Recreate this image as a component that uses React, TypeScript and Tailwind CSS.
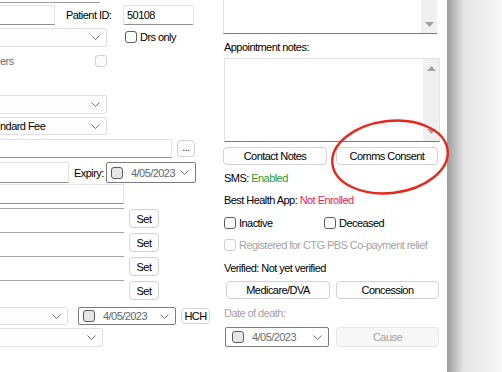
import React from 'react';

const Chevron: React.FC<{ color?: string }> = ({ color = '#707070' }) => (
  <svg width="9" height="5" viewBox="0 0 9 5" className="shrink-0">
    <path d="M0.5 0.5 L4.5 4.5 L8.5 0.5" fill="none" stroke={color} strokeWidth="1" />
  </svg>
);

const Check: React.FC<{ disabled?: boolean; fill?: string }> = ({ disabled, fill }) => (
  <div
    className={`w-[12px] h-[12px] shrink-0 rounded-[3px] border ${
      disabled ? 'border-[#cfcfcf] bg-[#fbfbfb]' : fill ? 'border-[#5c5c5c] bg-[#e6e6e6]' : 'border-[#5c5c5c] bg-white'
    }`}
  />
);

const Dropdown: React.FC<{ w: string; text?: string }> = ({ w, text }) => (
  <div className={`${w} h-full flex items-center justify-between pr-[6px] bg-[#fdfdfd] border border-l-0 border-[#e0e0e0] rounded-r-[3px]`}>
    <span className="text-black">{text}</span>
    <Chevron />
  </div>
);

const TextBox: React.FC<{ w: string; children?: React.ReactNode; leftCut?: boolean }> = ({ w, children, leftCut = true }) => (
  <div
    className={`${w} h-full flex items-center px-[3px] bg-white border border-[#e3e3e3] border-b-[#8e8e8e] ${
      leftCut ? 'border-l-0' : 'rounded-[2px]'
    }`}
  >
    {children}
  </div>
);

const Btn: React.FC<{ w: string; h?: string; children: React.ReactNode; disabled?: boolean }> = ({ w, h = 'h-full', children, disabled }) => (
  <div
    className={`${w} ${h} shrink-0 flex items-center justify-center rounded-[4px] border ${
      disabled ? 'bg-[#f7f7f7] border-[#e6e6e6] text-[#a3a3a3]' : 'bg-[#fdfdfd] border-[#d3d3d3] text-black'
    }`}
  >
    {children}
  </div>
);

const DatePicker: React.FC<{ w: string; textColor?: string; pad?: string }> = ({ w, textColor = 'text-[#5f6670]', pad = 'pl-[4px]' }) => (
  <div className={`${w} h-full flex items-center ${pad} pr-[6px] bg-white border border-[#7c7c7c] rounded-[2px]`}>
    <Check fill="gray" />
    <span className={`ml-[8px] ${textColor}`}>4/05/2023</span>
    <span className="ml-auto">
      <Chevron />
    </span>
  </div>
);

const Arrow: React.FC<{ up?: boolean }> = ({ up }) => (
  <svg width="9" height="5" viewBox="0 0 9 5">
    <path d={up ? 'M0 5 L4.5 0 L9 5 Z' : 'M0 0 L4.5 5 L9 0 Z'} fill="#a0a0a0" />
  </svg>
);

const App: React.FC = () => {
  return (
    <div className="w-[502px] h-[372px] overflow-hidden flex bg-white text-[11px] tracking-[-0.55px] leading-[14px] whitespace-nowrap text-black font-['Liberation_Sans',Arial,sans-serif]">
      <div className="relative w-[447px] h-full flex bg-white">
        {/* left column */}
        <div className="w-[223px] shrink-0 flex flex-col">
          <div className="w-[100px] h-[3px] border-b border-[#9a9a9a]" />
          <div className="mt-[2px] h-[20px] flex items-center">
            <TextBox w="w-[55px]" />
            <span className="ml-[11px] w-[57px]">Patient ID:</span>
            <TextBox w="w-[71px]" leftCut={false}>50108</TextBox>
          </div>
          <div className="mt-[3px] h-[19px] flex">
            <Dropdown w="w-[107px]" />
            <div className="ml-[18px] mt-[3px] flex items-start">
              <Check />
              <span className="ml-[3px] -mt-[1px]">Drs only</span>
            </div>
          </div>
          <div className="mt-[7px] h-[13px] flex items-center">
            <span className="w-[95px] text-[#6d6d6d]">ers</span>
            <Check disabled />
          </div>
          <div className="mt-[28px] h-[19px] flex">
            <Dropdown w="w-[107px]" />
          </div>
          <div className="mt-[3px] h-[18px] flex">
            <Dropdown w="w-[107px]" text="ndard Fee" />
          </div>
          <div className="mt-[4px] h-[19px] flex items-center">
            <TextBox w="w-[172px]" />
            <div className="ml-[5px]">
              <Btn w="w-[18px]" h="h-[17px]">
                <span className="-mt-[3px] text-[#333]">...</span>
              </Btn>
            </div>
          </div>
          <div className="mt-[4px] h-[21px] flex items-center">
            <TextBox w="w-[69px]" />
            <span className="ml-[5px] w-[32px]">Expiry:</span>
            <DatePicker w="w-[90px]" />
          </div>
          <div className="mt-[1px] h-[20px] flex">
            <TextBox w="w-[124px]" />
          </div>
          <div className="mt-[4px] flex flex-col">
            {[0, 1, 2, 3].map((i) => (
              <div key={i} className="h-[24px] flex items-start">
                <div className="w-[124px] h-full border-t border-[#a3a3a3]" />
                <div className="ml-[5px] mt-[1px] h-[19px]">
                  <Btn w="w-[30px]">Set</Btn>
                </div>
              </div>
            ))}
          </div>
          <div className="mt-[3px] h-[18px] flex items-center">
            <Dropdown w="w-[68px]" />
            <div className="ml-[10px] h-full">
              <DatePicker w="w-[98px]" />
            </div>
            <div className="ml-[5px]">
              <Btn w="w-[29px]" h="h-[16px]">HCH</Btn>
            </div>
          </div>
          <div className="mt-[3px] h-[19px] flex">
            <Dropdown w="w-[103px]" />
          </div>
        </div>

        {/* right column */}
        <div className="w-[217px] shrink-0 flex flex-col">
          <div className="w-[214px] h-[34px] flex justify-end border-l border-b border-l-[#e3e3e3] border-b-[#7a7a7a]">
            <div className="w-[16px] h-full bg-[#f0f0f0] flex flex-col items-center justify-end pb-[6px]">
              <Arrow />
            </div>
          </div>
          <div className="mt-[6px] h-[14px] pl-[1px]">Appointment notes:</div>
          <div className="mt-[4px] ml-[1px] w-[216px] h-[84px] flex justify-end border border-[#e3e3e3] border-b-[#7a7a7a]">
            <div className="w-[16px] h-full bg-[#f0f0f0] flex flex-col items-center justify-between pt-[7px] pb-[7px]">
              <Arrow up />
              <Arrow />
            </div>
          </div>
          <div className="mt-[5px] h-[18px] flex">
            <Btn w="w-[104px]">Contact Notes</Btn>
            <div className="ml-[9px]">
              <Btn w="w-[102px]" h="h-[18px]">Comms Consent</Btn>
            </div>
          </div>
          <div className="mt-[6px] h-[14px] pl-[1px]">
            SMS: <span className="text-[#2f9a2f]">Enabled</span>
          </div>
          <div className="mt-[8px] h-[14px] pl-[1px]">
            Best Health App: <span className="text-[#f4234b]">Not Enrolled</span>
          </div>
          <div className="mt-[9px] h-[13px] flex items-center pl-[1px]">
            <div className="w-[100px] flex items-center">
              <Check />
              <span className="ml-[3px]">Inactive</span>
            </div>
            <Check />
            <span className="ml-[3px]">Deceased</span>
          </div>
          <div className="mt-[9px] h-[13px] flex items-center pl-[1px]">
            <Check disabled />
            <span className="ml-[3px] text-[#a3a3a3]">Registered for CTG PBS Co-payment relief</span>
          </div>
          <div className="mt-[10px] h-[14px] pl-[1px]">Verified: Not yet verified</div>
          <div className="mt-[6px] h-[18px] flex pl-[3px]">
            <Btn w="w-[104px]">Medicare/DVA</Btn>
            <div className="ml-[6px]">
              <Btn w="w-[103px]" h="h-[18px]">Concession</Btn>
            </div>
          </div>
          <div className="mt-[7px] h-[14px] pl-[1px] text-[#a3a3a3]">Date of death:</div>
          <div className="mt-[7px] h-[20px] flex pl-[2px]">
            <DatePicker w="w-[104px]" textColor="text-[#6d6d6d]" pad="pl-[6px]" />
            <div className="ml-[7px]">
              <Btn w="w-[103px]" h="h-[20px]" disabled>Cause</Btn>
            </div>
          </div>
        </div>

        {/* hand-drawn highlight */}
        <svg className="absolute left-[328px] top-[116px] pointer-events-none" width="124" height="82" viewBox="0 0 124 82">
          <ellipse cx="62" cy="41" rx="58" ry="36" fill="none" stroke="#e8261c" strokeWidth="2.4" transform="rotate(-7 62 41)" />
        </svg>
      </div>
      <div className="flex-1 h-full bg-gradient-to-r from-[#9c9c9c] via-[#e4e4e4] via-30% to-[#f8f8f8]" />
    </div>
  );
};

export default App;
